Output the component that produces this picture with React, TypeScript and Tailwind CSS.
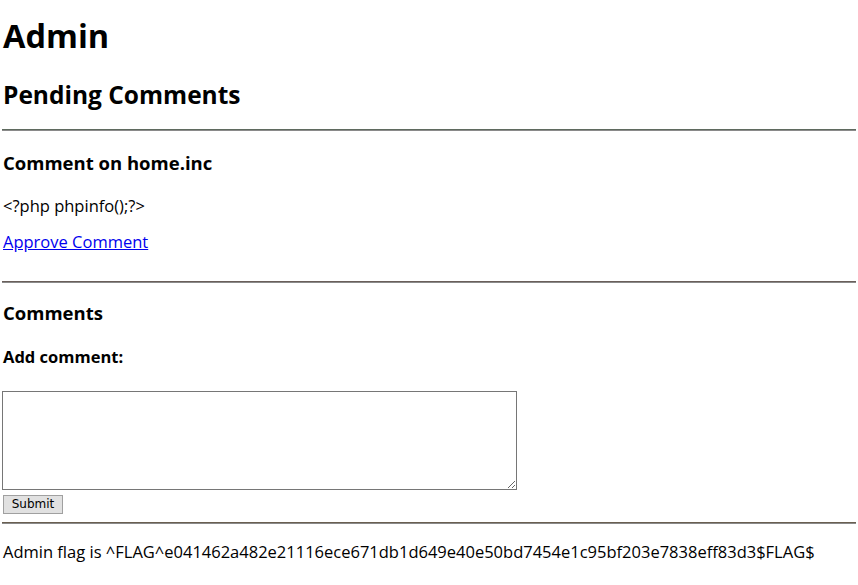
export default function App() {
  return (
    <div className="min-h-[585px] bg-white px-[2px] text-black font-['Open_Sans',sans-serif]">
      <h1 className="pt-[15px] pl-[1px] text-[32.5px] font-bold leading-[42px]">Admin</h1>
      <h2 className="mt-[23px] pl-[1px] text-[24.5px] font-bold leading-[30px]">Pending Comments</h2>
      <hr className="mt-[19px] border-t border-b border-t-[#5f6a5f] border-b-[#8a8a8a]" />
      <h3 className="mt-[20px] pl-[1px] text-[18.5px] font-bold leading-[24px]">Comment on home.inc</h3>
      <p className="mt-[20px] pl-[1px] text-[16.5px] leading-[22px]">&lt;?php phpinfo();?&gt;</p>
      <p className="mt-[14px] pl-[1px] text-[16.5px] leading-[22px]">
        <a href="#" className="text-[#0000ee] underline">Approve Comment</a>
      </p>
      <hr className="mt-[28px] border-t border-b border-t-[#6a5f5a] border-b-[#8a8a8a]" />
      <h3 className="mt-[18px] pl-[1px] text-[18.5px] font-bold leading-[24px]">Comments</h3>
      <h4 className="mt-[21px] pl-[1px] text-[16.5px] font-bold leading-[22px]">Add comment:</h4>
      <div className="mt-[23px]">
        <textarea className="block h-[99px] w-[515px] resize border border-[#767676] bg-white" />
        <button className="mt-[1px] ml-[1px] h-[19px] w-[60px] border border-[#a0a0a0] bg-[#e1e1e1] text-[12px] leading-[17px] font-['DejaVu_Sans',sans-serif]">
          Submit
        </button>
      </div>
      <hr className="mt-[8px] border-t border-b border-t-[#6a5f50] border-b-[#8a8a8a]" />
      <p className="mt-[17px] pl-[1px] text-[16.5px] leading-[22px]">
        Admin flag is ^FLAG^e041462a482e21116ece671db1d649e40e50bd7454e1c95bf203e7838eff83d3$FLAG$
      </p>
    </div>
  );
}
